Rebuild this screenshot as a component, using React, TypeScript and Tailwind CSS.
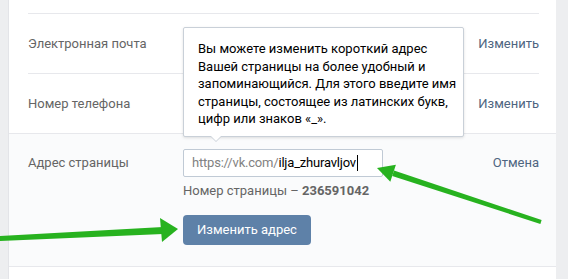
export default function App() {
  const font = { fontFamily: "Roboto, 'Open Sans', Arial, sans-serif" };

  return (
    <div
      className="relative h-[279px] w-[568px] overflow-hidden bg-[#edeef0] pl-2 pr-3 text-[13px]"
      style={font}
    >
      <div className="h-full border-l border-[#e3e4e8] bg-white">
        <div className="h-[13px]" />

        <div className="ml-[19px] mr-[17px] flex h-[60px] items-center justify-between border-t border-[#e7e8ec]">
          <span className="text-[#656565]">Электронная почта</span>
          <span className="text-[#4e6580]">Изменить</span>
        </div>

        <div className="ml-[19px] mr-[17px] flex h-[60px] items-center justify-between border-t border-[#e7e8ec]">
          <span className="text-[#656565]">Номер телефона</span>
          <span className="text-[#4e6580]">Изменить</span>
        </div>

        <div className="relative h-[134px] border-y border-[#e7e8ec] bg-[#fafbfc] pl-[19px] pr-[17px] pt-[15px]">
          <div className="flex items-center">
            <span className="w-[155px] leading-[28px] text-[#656565]">Адрес страницы</span>
            <div className="flex h-[28px] w-[200px] items-center rounded-[2px] border border-[#c0cad5] bg-white px-[8px] tracking-[-0.2px]">
              <span className="text-[#828282]">https://vk.com/</span>
              <span className="text-black">ilja_zhuravljov</span>
              <span className="ml-px h-[16px] w-px bg-black" />
            </div>
            <span className="ml-auto text-[#4e6580]">Отмена</span>
          </div>
          <div className="ml-[155px] mt-[5px] leading-[18px] text-[#656565]">
            Номер страницы – <span className="font-bold">236591042</span>
          </div>
          <button className="ml-[155px] mt-[15px] h-[30px] w-[128px] rounded-[4px] bg-[#5e81a8] text-[13px] text-white">
            Изменить адрес
          </button>
        </div>
      </div>

      {/* Tooltip */}
      <div className="absolute left-[183px] top-[27px] h-[110px] w-[281px] rounded-[2px] border border-[#c9d0d8] bg-white pl-[14px] pt-[12px] text-[13px] leading-[17.6px] text-black shadow-[0_1px_3px_rgba(0,0,0,0.12)]">
        Вы можете изменить короткий адрес
        <br />
        Вашей страницы на более удобный и
        <br />
        запоминающийся. Для этого введите имя
        <br />
        страницы, состоящее из латинских букв,
        <br />
        цифр или знаков «_».
        <div className="absolute -bottom-[6px] left-[26px] h-0 w-0 border-x-[6px] border-t-[6px] border-x-transparent border-t-[#c9d0d8]" />
        <div className="absolute -bottom-[5px] left-[27px] h-0 w-0 border-x-[5px] border-t-[5px] border-x-transparent border-t-white" />
      </div>

      {/* Green arrows */}
      <svg
        className="pointer-events-none absolute left-0 top-0"
        width="568"
        height="279"
        viewBox="0 0 568 279"
      >
        <g fill="#27b21f">
          <polygon points="0,236 163,227 163,234 0,241" />
          <polygon points="160,218 178,229 162,242" />
          <polygon points="392.2,176.1 394,170.5 541.6,220.1 540.4,223.9" />
          <polygon points="377,168 395.9,164.8 390.3,181.8" />
        </g>
      </svg>
    </div>
  );
}
